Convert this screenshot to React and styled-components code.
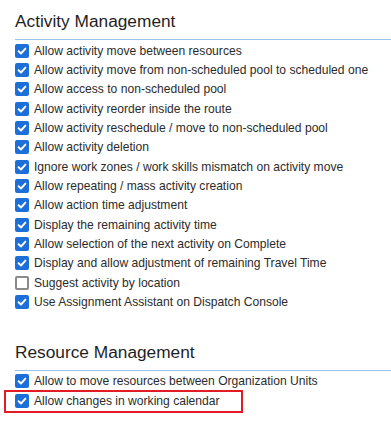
import React from "react";
import styled, { createGlobalStyle } from "styled-components";

const GlobalStyle = createGlobalStyle`
  body {
    margin: 0;
    background: #fff;
    font-family: "Liberation Sans", Arial, sans-serif;
  }
`;

const Page = styled.div`
  width: 391px;
  height: 427px;
  padding: 9px 0 0 15px;
  box-sizing: border-box;
  overflow: hidden;
`;

const Section = styled.section`
  margin-bottom: ${(props) => props.gap || 0}px;
`;

const Title = styled.h2`
  margin: 0;
  font-size: 17.3px;
  font-weight: normal;
  color: #1f1f1f;
  line-height: 24px;
  padding-bottom: 6px;
  border-bottom: 1px solid #9cc3ef;
`;

const List = styled.ul`
  list-style: none;
  margin: 0;
  padding: 1px 0 0;
`;

const Row = styled.li`
  position: relative;
  display: flex;
  align-items: center;
  height: 19.35px;
  font-size: 12.1px;
  color: #2b2b2b;
  white-space: nowrap;
`;

const Box = styled.span`
  flex: none;
  width: 14px;
  height: 14px;
  box-sizing: border-box;
  border-radius: 2px;
  margin-right: 5px;
  display: flex;
  align-items: center;
  justify-content: center;
  background: ${(props) => (props.checked ? "#1c6ed8" : "#fff")};
  border: ${(props) => (props.checked ? "none" : "2px solid #8a8a8a")};
`;

const Highlight = styled.span`
  position: absolute;
  left: -11px;
  top: -1px;
  width: 239px;
  height: 23px;
  box-sizing: border-box;
  border: 2px solid #e21b26;
  pointer-events: none;
`;

const Check = () => (
  <svg width="10" height="10" viewBox="0 0 10 10">
    <path
      d="M1.6 5.2 L4 7.5 L8.4 2.6"
      fill="none"
      stroke="#fff"
      strokeWidth="1.9"
      strokeLinecap="round"
      strokeLinejoin="round"
    />
  </svg>
);

const activity = [
  ["Allow activity move between resources", true],
  ["Allow activity move from non-scheduled pool to scheduled one", true],
  ["Allow access to non-scheduled pool", true],
  ["Allow activity reorder inside the route", true],
  ["Allow activity reschedule / move to non-scheduled pool", true],
  ["Allow activity deletion", true],
  ["Ignore work zones / work skills mismatch on activity move", true],
  ["Allow repeating / mass activity creation", true],
  ["Allow action time adjustment", true],
  ["Display the remaining activity time", true],
  ["Allow selection of the next activity on Complete", true],
  ["Display and allow adjustment of remaining Travel Time", true],
  ["Suggest activity by location", false],
  ["Use Assignment Assistant on Dispatch Console", true],
];

const resource = [
  ["Allow to move resources between Organization Units", true],
  ["Allow changes in working calendar", true, true],
];

const Option = ({ label, checked, marked }) => (
  <Row>
    <Box checked={checked}>{checked && <Check />}</Box>
    {label}
    {marked && <Highlight />}
  </Row>
);

export default function App() {
  return (
    <>
      <GlobalStyle />
      <Page>
        <Section gap={28}>
          <Title>Activity Management</Title>
          <List>
            {activity.map(([label, checked]) => (
              <Option key={label} label={label} checked={checked} />
            ))}
          </List>
        </Section>
        <Section>
          <Title>Resource Management</Title>
          <List>
            {resource.map(([label, checked, marked]) => (
              <Option key={label} label={label} checked={checked} marked={marked} />
            ))}
          </List>
        </Section>
      </Page>
    </>
  );
}
